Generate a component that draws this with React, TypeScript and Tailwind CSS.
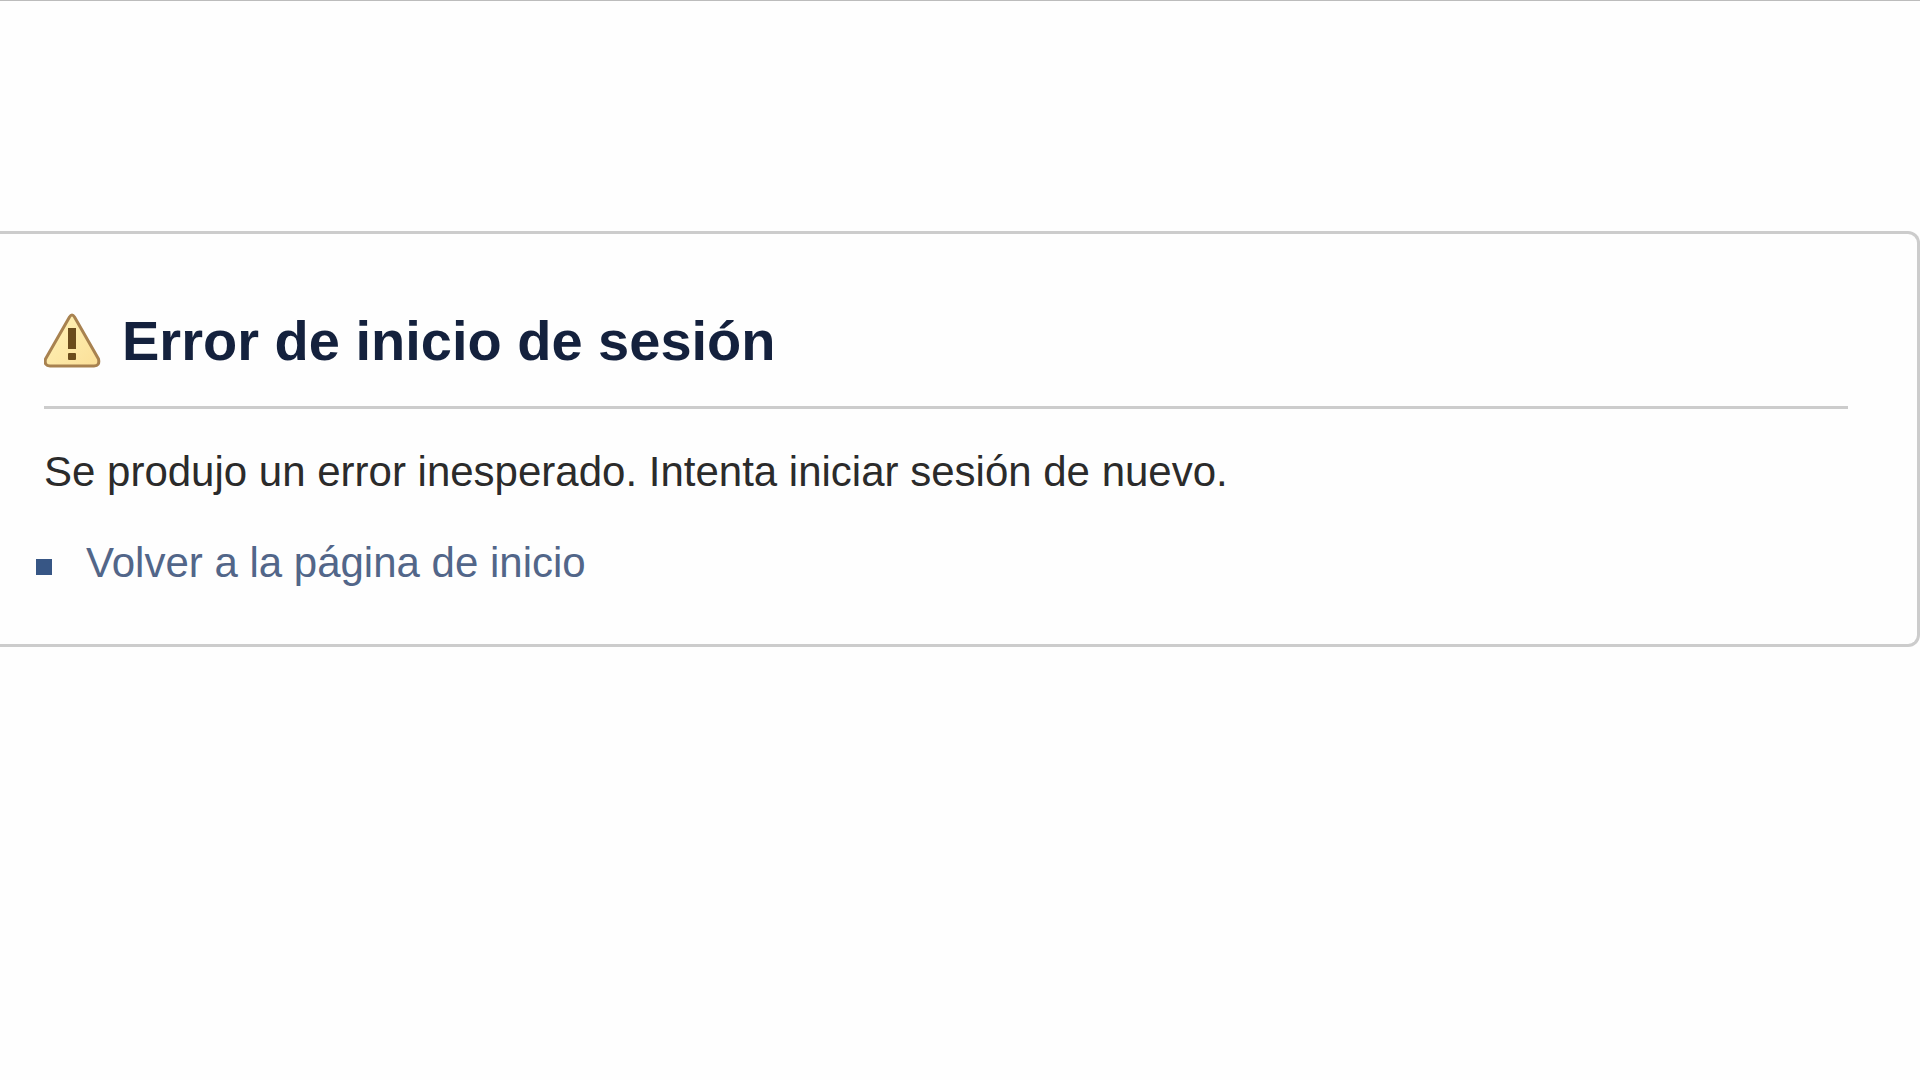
import React from 'react'

interface ErrorPanelProps {
  title: string
  message: string
  linkLabel: string
}

const WarningIcon: React.FC = () => (
  <svg viewBox="0 0 58 56" className="w-[58px] h-14 flex-shrink-0" aria-hidden="true">
    <defs>
      <linearGradient id="warning-fill" x1="0" y1="0" x2="1" y2="1">
        <stop offset="0" stopColor="#fff3b8" />
        <stop offset="1" stopColor="#fbdf98" />
      </linearGradient>
    </defs>
    <path
      d="M25.5 4 Q28 0 30.5 4 L54.5 46 Q56 53 50 53 H6 Q0 53 1.5 46 Z"
      fill="url(#warning-fill)"
      stroke="#a88250"
      strokeWidth="3"
      strokeLinejoin="round"
    />
    <path d="M24 15 H32 V36 H24 Z" fill="#6b4c1c" />
    <rect x="24" y="40" width="8" height="7" rx="1" fill="#6b4c1c" />
  </svg>
)

const ErrorPanel: React.FC<ErrorPanelProps> = ({ title, message, linkLabel }) => {
  return (
    <section className="mt-[230px] pt-[75px] pb-[57px] pl-11 pr-[69px] border-3 border-l-0 border-[#cccccc] rounded-r-xl">
      <div className="flex items-center gap-5 pb-[33px] border-b-3 border-[#cccccc]">
        <WarningIcon />
        <h1 className="text-[56px] leading-[64px] font-bold text-[#14213d]">{title}</h1>
      </div>

      <p className="mt-[39px] text-[42px] leading-[48px] text-[#2b2b2b]">{message}</p>

      <ul className="mt-[43px] -ml-2">
        <li className="flex items-center gap-[34px] text-[42px] leading-[48px]">
          <span className="w-4 h-4 mt-2 bg-[#375685]" />
          <a href="#" className="text-[#526689]">
            {linkLabel}
          </a>
        </li>
      </ul>
    </section>
  )
}

export default function App() {
  return (
    <main className="min-h-screen bg-[#fefefe] border-t border-[#bcbcbc] font-['Liberation_Sans',Arial,sans-serif]">
      <ErrorPanel
        title="Error de inicio de sesión"
        message="Se produjo un error inesperado. Intenta iniciar sesión de nuevo."
        linkLabel="Volver a la página de inicio"
      />
    </main>
  )
}
